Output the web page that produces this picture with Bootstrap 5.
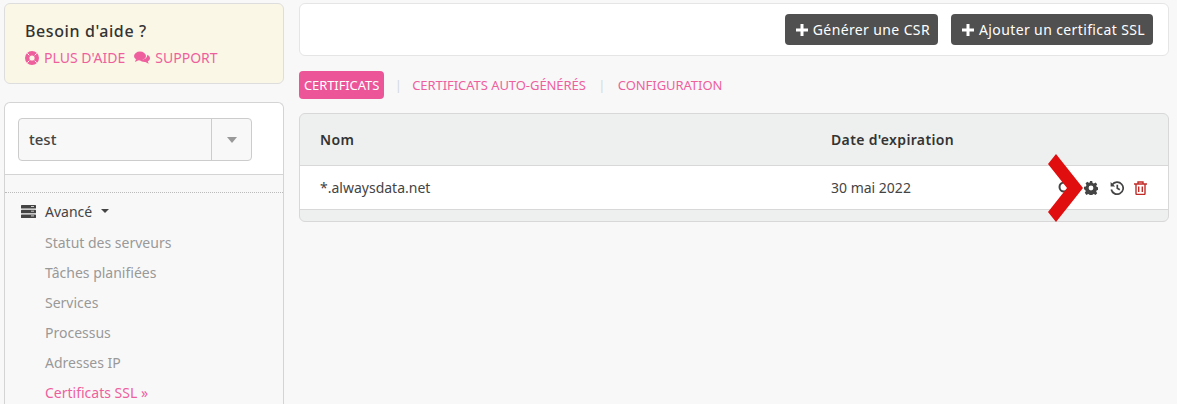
<!DOCTYPE html>
<html lang="fr"><head><meta charset="utf-8">
<link href="https://cdn.jsdelivr.net/npm/bootstrap@5.3.0/dist/css/bootstrap.min.css" rel="stylesheet">
<style>
html,body{height:404px;overflow:hidden}
body{background:#f8f8f8;font-family:"Noto Sans","Open Sans",sans-serif;font-size:14px;color:#333;padding:3px 8px 0 4px}
.shell{gap:15px;align-items:flex-start}
.side{width:280px;flex:none}
.main-col{flex:1;min-width:0}
.help-box{background:#fbf7e6;border:1px solid #ddd;border-radius:6px;height:81px;padding:15px 20px;margin-bottom:18px}
.help-title{font-size:16px;font-weight:500;letter-spacing:.6px;line-height:24px;color:#333;margin-bottom:5px}
.pink{color:#ee5f9e;text-decoration:none}
.help-links{gap:9px;line-height:20px;font-size:14px}
.help-links a{display:flex;align-items:center;gap:5px}
.nav-box{background:#f8f8f8;border:1px solid #d4d4d4;border-bottom:0;border-radius:6px 6px 0 0;height:310px}
.pick-wrap{background:#fff;height:72px;padding:15px 13px;border-bottom:1px solid #d4d4d4;border-radius:6px 6px 0 0}
.picker{width:234px;height:43px;background:#f8f8f8;border:1px solid #ccc;border-radius:4px}
.picker-name{flex:1;padding-left:10px;font-size:15px;font-weight:500;color:#444;line-height:41px}
.picker-arrow{width:40px;border-left:1px solid #ccc}
.dots{border-top:1px dotted #bbb;margin-top:17px;padding:0 16px}
.sec-head{height:36px;gap:9px;color:#444}
.sub-list{padding-left:24px;margin:2px 0 0;list-style:none}
.sub-list li{height:30px;line-height:24px;color:#999}
.sub-list li.pink{color:#ee5f9e}
.top-bar{background:#fff;border:1px solid #e5e5e5;border-radius:6px;height:53px;padding:10px 15px;gap:13px}
.dark-btn{background:#505050;color:#fff;border:0;border-radius:4px;height:31px;padding:0 8px 0 11px;font-size:14px;letter-spacing:.38px;display:flex;align-items:center;gap:5px}
.tab-row{margin-top:15px;height:28px;font-size:13px;line-height:30px;letter-spacing:-.06px}
.tab-on{background:#ec5598;color:#fff;border-radius:4px;padding:0 5px;line-height:29px;height:28px;letter-spacing:-.1px}
.tab-sep{color:#d3d9e0;text-align:center;font-size:13px}
.sep-a{width:28px}
.sep-b{width:32px}
.cert-box{margin-top:14px;border:1px solid #d8d8d8;border-radius:6px;background:#eef0ef;height:109px;overflow:hidden}
.cert-head{height:52px;border-bottom:1px solid #d8d8d8;font-weight:600;letter-spacing:.35px;font-size:14px;color:#333;padding-left:20px}
.cert-row{height:44px;background:#fff;border-bottom:1px solid #d8d8d8;padding-left:20px;color:#444;font-size:14px}
.name-cell{width:511px;flex:none}
.act-icons{margin-left:auto;margin-right:21px;gap:12px}
.bin-icon{margin-left:-2px}
.big-mark{position:absolute;left:1048px;top:154px;width:36px;height:68px;pointer-events:none}
</style></head>
<body>
<div class="d-flex shell">
 <aside class="side">
  <div class="help-box">
   <div class="help-title">Besoin d'aide ?</div>
   <div class="d-flex help-links">
    <a class="pink" href="#"><svg width="14" height="14" viewBox="0 0 14 14"><circle cx="7" cy="7" r="4.800" fill="none" stroke="#ee5f9e" stroke-width="4.400"/><path d="M2.300 2.300l2 2M11.700 2.300l-2 2M2.300 11.700l2-2M11.700 11.700l-2-2" stroke="#fbf7e6" stroke-width="1"/></svg>PLUS D'AIDE</a>
    <a class="pink" href="#"><svg width="16" height="14" viewBox="0 0 16 14" fill="#ee5f9e"><ellipse cx="6" cy="5" rx="6" ry="4.400"/><path d="M2 8L1 11l4-2z"/><path d="M13.300 3.800C15 4.600 16 5.800 16 7.200c0 1.300-.9 2.400-2.200 3.100l.9 2.500-3.400-1.800c-2.500.1-4.500-.6-5.500-1.900 3.800.1 7.600-1.700 7.500-5.300z"/></svg>SUPPORT</a>
   </div>
  </div>
  <div class="nav-box">
   <div class="pick-wrap">
    <div class="picker d-flex">
     <div class="picker-name">test</div>
     <div class="picker-arrow d-flex align-items-center justify-content-center"><svg width="10" height="6" viewBox="0 0 10 6"><path d="M0 0h10L5 6z" fill="#999"/></svg></div>
    </div>
   </div>
   <div class="dots">
    <div class="sec-head d-flex align-items-center">
     <svg width="15" height="13" viewBox="0 0 15 13" fill="#444"><rect y="0" width="15" height="3.600" rx=".6"/><rect y="4.700" width="15" height="3.600" rx=".6"/><rect y="9.400" width="15" height="3.600" rx=".6"/><path d="M10 1.500h3M10 6.200h3M10 10.900h3" stroke="#eee" stroke-width=".8"/></svg>
     <span>Avancé</span>
     <svg width="8" height="4" viewBox="0 0 8 4"><path d="M0 0h8L4 4z" fill="#444"/></svg>
    </div>
    <ul class="sub-list">
     <li>Statut des serveurs</li><li>Tâches planifiées</li><li>Services</li><li>Processus</li><li>Adresses IP</li><li class="pink">Certificats SSL »</li>
    </ul>
   </div>
  </div>
 </aside>
 <main class="main-col">
  <div class="top-bar d-flex justify-content-end align-items-center">
   <button class="dark-btn"><svg width="12" height="12" viewBox="0 0 12 12"><path d="M4.500 0h3v4.500H12v3H7.500V12h-3V7.500H0v-3h4.500z" fill="#fff"/></svg>Générer une CSR</button>
   <button class="dark-btn"><svg width="12" height="12" viewBox="0 0 12 12"><path d="M4.500 0h3v4.500H12v3H7.500V12h-3V7.500H0v-3h4.500z" fill="#fff"/></svg>Ajouter un certificat SSL</button>
  </div>
  <div class="tab-row d-flex align-items-center">
   <a class="tab-on text-decoration-none" href="#">CERTIFICATS</a><span class="tab-sep sep-a">|</span>
   <a class="pink" href="#">CERTIFICATS AUTO-GÉNÉRÉS</a><span class="tab-sep sep-b">|</span>
   <a class="pink" href="#">CONFIGURATION</a>
  </div>
  <div class="cert-box">
   <div class="cert-head d-flex align-items-center"><div class="name-cell">Nom</div><div>Date d'expiration</div></div>
   <div class="cert-row d-flex align-items-center">
    <div class="name-cell">*.alwaysdata.net</div><div>30 mai 2022</div>
    <div class="act-icons d-flex align-items-center">
     <svg width="14" height="14" viewBox="0 0 14 14"><circle cx="6" cy="6" r="4.500" fill="none" stroke="#444" stroke-width="2"/><path d="M9.500 9.500L13 13" stroke="#444" stroke-width="2.400"/></svg>
     <svg width="14" height="14" viewBox="0 0 14 14"><path fill="#444" fill-rule="evenodd" d="M5.800 0h2.400l.4 1.900 1.300.6 1.700-1 1.600 1.700-1 1.600.6 1.300 1.900.4v2.400l-1.900.4-.6 1.300 1 1.700-1.700 1.600-1.600-1-1.300.6-.4 1.900H5.800l-.4-1.900-1.300-.6-1.700 1L.8 11.800l1-1.600-.6-1.300L0 8.200V5.800l1.900-.4.600-1.300-1-1.700L3.200.8l1.600 1 1.300-.6zM7 4.600a2.400 2.400 0 1 0 0 4.800 2.400 2.400 0 0 0 0-4.800z"/></svg>
     <svg width="14" height="14" viewBox="0 0 14 14" fill="none" stroke="#444"><path d="M2.200 3.800A6 6 0 1 1 1.300 8.500" stroke-width="1.700"/><path d="M.6 1v4.500h4.500z" fill="#444" stroke="none"/><path d="M7.300 3.800v3.500l2.500 1.500" stroke-width="1.700"/></svg>
     <svg class="bin-icon" width="13" height="14" viewBox="0 0 13 14" fill="none" stroke="#c02c28" stroke-width="1.400"><path d="M0 3h13"/><path d="M4 3V1h5V3"/><path d="M2 3v9.500a1 1 0 0 0 1 1h7a1 1 0 0 0 1-1V3"/><path d="M4.700 5.500v5.500M8.300 5.500v5.500"/></svg>
    </div>
   </div>
  </div>
 </main>
</div>
<svg class="big-mark" viewBox="0 0 36 68"><path d="M8 0L35 34 8 68 0 58 19 34 0 10z" fill="#e00e0e"/></svg>
<script src="https://cdn.jsdelivr.net/npm/bootstrap@5.3.0/dist/js/bootstrap.bundle.min.js"></script>
</body></html>
